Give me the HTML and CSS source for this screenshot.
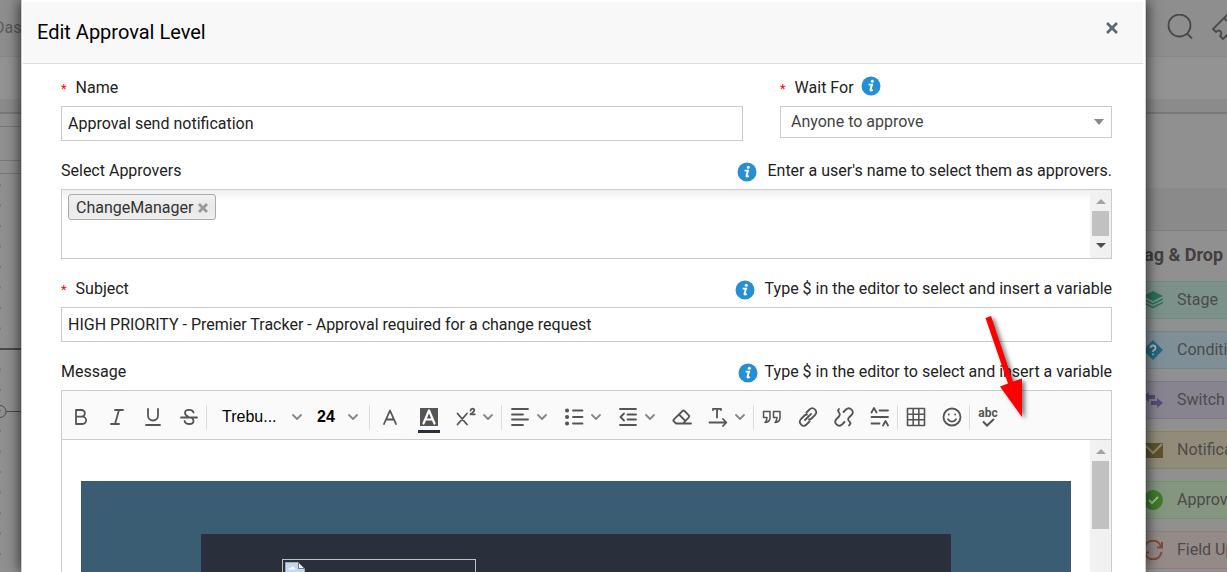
FILE: index.html
```
<!DOCTYPE html>
<html lang="en">
<head>
  <meta charset="utf-8">
  <title>Edit Approval Level</title>
  <meta name="viewport" content="width=device-width, initial-scale=1">
  <link rel="stylesheet" href="styles.css">
</head>
<body>
  <svg width="0" height="0" class="defs" aria-hidden="true">
    <symbol id="chev" viewBox="0 0 10 6"><path d="M1 1l4 4 4-4" fill="none" stroke="#888" stroke-width="1.8" stroke-linecap="round" stroke-linejoin="round"/></symbol>
    <symbol id="info" viewBox="0 0 20 20"><circle cx="10" cy="10" r="9.5" fill="#268fd3"/><circle cx="11.3" cy="5.3" r="1.5" fill="#fff"/><path d="M7.6 8.6h3.4l-1.5 5.2q-.2 1.400 2.200.1" fill="none" stroke="#fff" stroke-width="1.9"/></symbol>
  </svg>

  <div class="page">
    <header class="topbar">
      <span class="topbar-link">Das</span>
      <div class="topbar-icons">
        <svg width="26" height="26" viewBox="0 0 26 26" fill="none" stroke="#494949" stroke-width="1.8"><circle cx="12.500" cy="11.500" r="11"/><path d="M20 19.500l5 5"/></svg>
        <svg width="26" height="26" viewBox="0 0 26 26" fill="none" stroke="#494949" stroke-width="1.8"><path d="M16 0L1 15l3 3q3-3 5 0 1 2-1 4l3 3L26 10M12 4l3 3M13 22h2"/></svg>
      </div>
    </header>
    <div class="subbar"></div>
    <div class="band"></div>
    <div class="workspace">
      <div class="canvas">
        <svg width="22" height="460" viewBox="0 0 22 460" fill="none" stroke="#4a4a4a">
          <path d="M0 12.500h22M0 46.500h22M0 59.500h22" stroke="#787878"/>
          <path d="M.5 70v390" stroke="#777" stroke-dasharray="2 18.500"/>
          <path d="M0 235h22" stroke-width="2"/>
          <path d="M6 297.500h16"/>
          <circle cx="0" cy="297.500" r="6"/>
        </svg>
      </div>
      <aside class="sidebar">
        <div class="sidebar-space"></div>
        <div class="sidebar-head"></div>
        <h2>Drag &amp; Drop</h2>
        <ul>
          <li class="stage">
            <svg width="20" height="20" viewBox="0 0 20 20"><path d="M10 1l10 5-10 5L0 6z" fill="#2d6e5a"/><path d="M0 9l10 5 10-5M0 12.500l10 5 10-5" fill="none" stroke="#2d6e5a" stroke-width="1.5"/></svg>
            <span>Stage</span></li>
          <li class="condition">
            <svg width="20" height="20" viewBox="0 0 20 20"><path d="M10 0l10 10-10 10L0 10z" fill="#286680"/><path d="M7.500 8q0-2.500 2.500-2.500T12.500 8q0 1.500-2.500 3v1M10 13.500v1.800" fill="none" stroke="#a9b5bb" stroke-width="1.800"/></svg>
            <span>Condition</span></li>
          <li class="switch">
            <svg width="20" height="20" viewBox="0 0 20 20" fill="#574d78"><path d="M0 7l6-5v3h6v4H6v3zM20 13l-6 5v-3H8v-4h6V8z"/></svg>
            <span>Switch</span></li>
          <li class="notify">
            <svg width="20" height="20" viewBox="0 0 20 20"><path d="M0 3h20v15H0z" fill="#5e5230"/><path d="M1 4l9 9 9-9" fill="none" stroke="#918b70" stroke-width="2"/></svg>
            <span>Notification</span></li>
          <li class="approve">
            <svg width="20" height="20" viewBox="0 0 20 20"><circle cx="10" cy="10" r="10" fill="#417a2c"/><path d="M6 10l3 3 6-6" fill="none" stroke="#a0b99a" stroke-width="2"/></svg>
            <span>Approval</span></li>
          <li class="update">
            <svg width="20" height="20" viewBox="0 0 20 20" fill="none" stroke="#804a3c" stroke-width="2"><path d="M1.500 8A8.500 8.500 0 0 1 18 6.500M18.500 12A8.500 8.500 0 0 1 2 13.500M19 2v5.500h-5M1 18v-5.500h5"/></svg>
            <span>Field Update</span></li>
        </ul>
      </aside>
    </div>
  </div>

  <div class="modal" role="dialog" aria-labelledby="modal-title">
    <div class="modal-header">
      <h1 id="modal-title">Edit Approval Level</h1>
      <button type="button" class="close" aria-label="Close">
        <svg width="12" height="12" viewBox="0 0 12 12"><path d="M1 1l10 10M11 1L1 11" stroke="#5d6870" stroke-width="2.8"/></svg>
      </button>
    </div>

    <form class="modal-body">
      <div class="field-row">
        <div class="field">
          <div class="label-row"><label for="name" class="required">Name</label></div>
          <input type="text" id="name" value="Approval send notification">
        </div>
        <div class="field field-wait">
          <div class="label-row">
            <label for="wait" class="required">Wait For</label>
            <svg class="info info-label"><use href="#info"/></svg>
          </div>
          <div class="select-box">
            <select id="wait"><option>Anyone to approve</option></select>
            <svg width="10" height="6" viewBox="0 0 10 6"><path d="M0 0h10L5 6z" fill="#888"/></svg>
          </div>
        </div>
      </div>

      <div class="field">
        <div class="label-row">
          <label for="approvers">Select Approvers</label>
          <span class="hint"><svg class="info"><use href="#info"/></svg>Enter a user's name to select them as approvers.</span>
        </div>
        <div class="approvers">
          <div class="tags">
            <span class="tag">ChangeManager
              <button type="button" aria-label="Remove"><svg width="10" height="10" viewBox="0 0 10 10"><path d="M1 1l8 8M9 1L1 9" stroke="#999" stroke-width="2.800"/></svg></button>
            </span>
            <input type="text" id="approvers">
          </div>
          <div class="scrollbar">
            <svg width="10" height="5" viewBox="0 0 10 5"><path d="M5 0l5 5H0z" fill="#a3a3a3"/></svg>
            <div class="thumb"></div>
            <svg width="10" height="5" viewBox="0 0 10 5"><path d="M0 0h10L5 5z" fill="#505050"/></svg>
          </div>
        </div>
      </div>

      <div class="field">
        <div class="label-row">
          <label for="subject" class="required">Subject</label>
          <span class="hint"><svg class="info"><use href="#info"/></svg>Type $ in the editor to select and insert a variable</span>
        </div>
        <input type="text" id="subject" value="HIGH PRIORITY - Premier Tracker - Approval required for a change request">
      </div>

      <div class="field field-message">
        <div class="label-row">
          <span>Message</span>
          <span class="hint hint-tight"><svg class="info"><use href="#info"/></svg>Type $ in the editor to select and insert a variable</span>
        </div>
        <div class="editor">
          <div class="toolbar">
            <div class="group">
              <button type="button" aria-label="Bold"><svg class="icon" viewBox="0 0 20 20"><path d="M5 3h5.500a3.300 3.300 0 0 1 0 6.700H5zM5 9.700h6.500a3.600 3.600 0 0 1 0 7.300H5z"/></svg></button>
              <button type="button" aria-label="Italic"><svg class="icon" viewBox="0 0 20 20"><path d="M8 3h8M4 17h8M12 3L8 17"/></svg></button>
              <button type="button" aria-label="Underline"><svg class="icon" viewBox="0 0 20 20"><path d="M5 2v6.500a5 5 0 0 0 10 0V2M3 18h14"/></svg></button>
              <button type="button" aria-label="Strikethrough"><svg class="icon" viewBox="0 0 20 20"><path d="M14.500 5.500C13.500 2 6 2 6 6q0 2 3 3.500M2 10.500h16M5.500 14c1 4 9 4 9 0q0-2-2-3.500"/></svg></button>
            </div>
            <div class="group">
              <div class="pick pick-font">
                <select aria-label="Font"><option>Trebu...</option></select>
                <svg class="chev"><use href="#chev"/></svg>
              </div>
              <div class="pick pick-size">
                <select aria-label="Font size"><option>24</option></select>
                <svg class="chev"><use href="#chev"/></svg>
              </div>
            </div>
            <div class="group">
              <button type="button" class="color" aria-label="Text color"><svg class="icon" viewBox="0 0 20 20"><path d="M4 17l6-13.500L16 17M6 12.500h8"/></svg><i class="swatch swatch-white"></i></button>
              <button type="button" class="color" aria-label="Background color"><svg class="icon" viewBox="0 0 20 20"><path d="M1 1h18v18H1z" fill="#555" stroke="none"/><path d="M4.500 16.500L10 3.500l5.500 13M6.500 12.500h7" stroke="#fff" stroke-width="2.200"/></svg><i class="swatch"></i></button>
              <button type="button" class="drop" aria-label="Superscript"><svg class="icon" viewBox="0 0 20 20"><path d="M1.500 6.500l9.500 11M11 6.500l-9.500 11M14.500 3.500q.3-1.800 2-1.800t1.800 1.500Q18.300 4.500 14.500 7.300h4.300" /></svg><svg class="chev"><use href="#chev"/></svg></button>
            </div>
            <div class="group">
              <button type="button" class="drop" aria-label="Align"><svg class="icon" viewBox="0 0 20 20"><path d="M2 2h16M2 7.500h11M2 12.500h16M2 18h11"/></svg><svg class="chev"><use href="#chev"/></svg></button>
              <button type="button" class="drop" aria-label="List"><svg class="icon" viewBox="0 0 20 20"><path d="M9 3.500h9.500M9 10h9.500M9 16.500h9.500"/><path d="M3 3.500h.1M3 10h.1M3 16.500h.1" stroke-width="4"/></svg><svg class="chev"><use href="#chev"/></svg></button>
              <button type="button" class="drop" aria-label="Indent"><svg class="icon" viewBox="0 0 20 20"><path d="M2 2h16M9.500 7.500H18M9.500 12.500H18M2 18h16M6 6.500L2.500 10 6 13.500"/></svg><svg class="chev"><use href="#chev"/></svg></button>
              <button type="button" aria-label="Clear format"><svg class="icon" viewBox="0 0 20 20"><path d="M4 16.500h15M4 16.500l-2.300-2.300q-.8-.8 0-1.600L10.500 4q1-1 2 0l4.300 4.300q1 1 0 2L11 16.500M7 7.500l6.500 6.500"/></svg></button>
              <button type="button" class="drop" aria-label="Direction"><svg class="icon" viewBox="0 0 20 20"><path d="M5 3V1.800h8V3M9 2v8.500M1.500 15.500H18M15 12l3.300 3.500L15 19"/></svg><svg class="chev"><use href="#chev"/></svg></button>
            </div>
            <div class="group">
              <button type="button" aria-label="Quote"><svg class="icon" viewBox="0 0 20 20"><path d="M1.500 4.500H8v6.500q0 4-5 4.500 2-1.500 2-5H1.500zM11.500 4.500H18v6.500q0 4-5 4.500 2-1.500 2-5h-3.500z" stroke-width="1.500"/></svg></button>
              <button type="button" aria-label="Link"><svg class="icon" viewBox="0 0 20 20"><path d="M8.500 5.500l3-3c3.500-3.500 9 1.500 5.500 5.500l-3.500 3.500q-1 1-2.500 1M11.500 14.500l-3 3C5 21-.5 16 3 12l3.500-3.500q1-1 2.500-1M7 13l6-6"/></svg></button>
              <button type="button" aria-label="Unlink"><svg class="icon" viewBox="0 0 20 20"><path d="M9.500 5l2.500-2.500c4-3.500 9 2 5.500 5.500L15 10.500q-2 2 .5 4l1 2-1.500 2M10.500 15L8 17.500c-4 3.500-9-2-5.500-5.500L5 9.500q1.500-2 0-4l-1-2L5 2"/></svg></button>
              <button type="button" aria-label="Line height"><svg class="icon" viewBox="0 0 20 20"><path d="M9.500 3.500H18M1.500 10H18M1.500 16.500h8M1.500 5.500L4 1l2.500 4.500M13 18.500l2.500-4.500 2.500 4.500"/></svg></button>
            </div>
            <div class="group">
              <button type="button" aria-label="Table"><svg class="icon" viewBox="0 0 20 20"><path d="M1.500 1.500h17v17h-17zM7.200 1.500v17M12.800 1.500v17M1.500 7.200h17M1.500 12.800h17" stroke-width="1.600"/></svg></button>
              <button type="button" aria-label="Emoji"><svg class="icon" viewBox="0 0 20 20"><circle cx="10" cy="10" r="8.500"/><path d="M6 12.300c2 3 6 3 8 0M6.800 7.500h.1M13.100 7.500h.1"/></svg></button>
            </div>
            <div class="group">
              <button type="button" class="spell" aria-label="Spell check"><span>abc</span><svg width="14" height="9" viewBox="0 0 14 9"><path d="M2 3.500l4 4L13 1" fill="none" stroke="#555" stroke-width="2"/></svg></button>
            </div>
          </div>
          <div class="editor-area">
            <div class="mail">
              <div class="mail-card">
                <div class="broken-image">
                  <svg width="20" height="22" viewBox="0 0 20 22"><path d="M.5.500h13l6 6v15H.5z" fill="#c3d6f5" stroke="#aaa"/><path d="M3 7.500q1-2 3-1.500 2-3 3.500.5 2 0 1.500 1z" fill="#fff"/><path d="M13.500.500v6h6z" fill="#f5f5f5" stroke="#777"/></svg>
                </div>
              </div>
            </div>
            <div class="scrollbar">
              <svg width="10" height="5" viewBox="0 0 10 5"><path d="M5 0l5 5H0z" fill="#a3a3a3"/></svg>
              <div class="thumb thumb-long"></div>
            </div>
          </div>
        </div>
      </div>
    </form>

    <svg class="pointer" width="50" height="110" viewBox="0 0 50 110" aria-hidden="true"><path d="M5.500 8l5.500-2 22 65.500 9-3L42 107 20 76.500l8-3z" fill="#f00"/></svg>
  </div>
</body>
</html>
```
FILE: styles.css
```
* {
  box-sizing: border-box;
}

body {
  margin: 0;
  height: 100vh;
  overflow: hidden;
  background-color: #909090;
  color: #222;
  font-family: Roboto, sans-serif;
  font-size: 16px;
  line-height: 24px;
}

h1, h2, ul {
  margin: 0;
  padding: 0;
}

button, input, select {
  font: inherit;
  color: inherit;
}

button {
  display: flex;
  align-items: center;
  padding: 0;
  border: 0;
  background: none;
  cursor: pointer;
}

select {
  appearance: none;
  border: 0;
  background: none;
}

.defs {
  position: absolute;
}

/* page behind the dialog */
.page {
  display: flex;
  flex-direction: column;
  height: 100vh;
  overflow: hidden;
}

.topbar {
  display: flex;
  justify-content: space-between;
  align-items: center;
  height: 57px;
  flex: none;
  border-bottom: 1px solid #888;
  background-color: #8e8e8e;
}

.topbar-link {
  margin-left: -6px;
  color: #5c5c5c;
}

.topbar-icons {
  display: flex;
  gap: 19px;
  margin-right: -11px;
  padding-bottom: 2px;
}

.subbar {
  flex: none;
  height: 42px;
  background-color: #939393;
}

.band {
  flex: none;
  height: 15px;
  border-bottom: 2px solid #797979;
  background-color: #8b8b8b;
}

.workspace {
  display: flex;
  justify-content: space-between;
  flex: 1;
}

.canvas svg {
  display: block;
}

.sidebar {
  width: 101px;
  color: #4b4b4b;
}

.sidebar-space {
  height: 74px;
}

.sidebar-head {
  height: 43px;
  border-bottom: 1px solid #808080;
  background-color: #8a8a8a;
}

.sidebar h2 {
  height: 50px;
  padding-top: 12px;
  font-size: 18px;
  font-weight: 700;
  white-space: nowrap;
  color: #433f3f;
}

.sidebar ul {
  display: flex;
  flex-direction: column;
  gap: 12px;
  list-style: none;
}

.sidebar li {
  display: flex;
  align-items: center;
  gap: 14px;
  height: 38px;
  padding-left: 17px;
  border-width: 1px 0;
  border-style: solid;
  white-space: nowrap;
  overflow: hidden;
}

.sidebar li svg {
  flex: none;
}

.stage {
  background-color: #7c9189;
  border-color: #6b8c7f;
}

.condition {
  background-color: #7f8f98;
  border-color: #6d8795;
}

.switch {
  background-color: #88848f;
  border-color: #7b7590;
}

.notify {
  background-color: #918c79;
  border-color: #8b8263;
}

.approve {
  background-color: #849580;
  border-color: #729168;
}

.update {
  background-color: #948a87;
  border-color: #917c78;
}

/* dialog */
.modal {
  position: absolute;
  top: 0;
  bottom: 0;
  left: 21px;
  right: 81px;
  display: flex;
  flex-direction: column;
  border: solid #ccc;
  border-width: 0 1px;
  background-color: #fff;
  box-shadow: 0 0 14px rgba(0, 0, 0, 0.8);
}

.modal-header {
  display: flex;
  justify-content: space-between;
  align-items: center;
  flex: none;
  height: 62px;
  margin: 2px 2px 0 1px;
  padding: 0 25px 2px 14px;
  border-bottom: 1px solid #ddd;
  background-color: #f8f8f8;
}

.modal-header h1 {
  font-size: 20px;
  font-weight: 400;
  color: #000;
}

.close {
  padding-bottom: 7px;
}

.modal-body {
  display: flex;
  flex-direction: column;
  flex: 1;
  gap: 17px;
  min-height: 0;
  padding: 11px 33px 0 39px;
}

.field-row {
  display: flex;
  gap: 37px;
}

.field {
  display: flex;
  flex-direction: column;
}

.modal-body > .field {
  flex: none;
}

.field-row .field {
  flex: 1;
}

.field-row .field-wait {
  flex: 0 0 332px;
}

.label-row {
  display: flex;
  justify-content: space-between;
  padding-top: 1px;
  margin-bottom: 6px;
}

.field-wait .label-row {
  justify-content: flex-start;
  gap: 7px;
}

.required::before {
  content: "*";
  margin-right: 9px;
  color: #f00;
  font-size: 13px;
  line-height: 1;
}

.hint {
  display: flex;
  gap: 10px;
}

.hint-tight {
  gap: 7px;
}

.info {
  width: 20px;
  height: 20px;
  margin-top: 3px;
}

.info-label {
  margin-top: 0;
}

.field > input {
  width: 100%;
  height: 35px;
  padding: 0 6px;
  border: 1px solid #ccc;
}

.select-box {
  display: grid;
  align-items: center;
  height: 32px;
  border: 1px solid #ccc;
  color: #444;
}

.select-box > *, .pick > * {
  grid-area: 1 / 1;
}

.select-box select {
  height: 30px;
  padding: 0 10px;
}

.select-box svg {
  justify-self: end;
  margin-right: 7px;
  pointer-events: none;
}

.approvers {
  display: flex;
  height: 70px;
  border: 1px solid #ccc;
}

.tags {
  display: flex;
  align-items: flex-start;
  flex: 1;
  padding: 4px 6px;
  background-image: linear-gradient(#eee, #fff 10px);
}

.tags input {
  flex: 1;
  border: 0;
  background: none;
}

.tag {
  display: flex;
  align-items: center;
  gap: 5px;
  height: 26px;
  padding: 1px 7px 0;
  border: 1px solid #aaa;
  border-radius: 3px;
  background-image: linear-gradient(#f2f2f2, #e9e9e9 50%, #eee);
  color: #333;
}

.scrollbar {
  display: flex;
  flex-direction: column;
  align-items: center;
  width: 21px;
  padding: 9px 0;
  gap: 7px;
  background-color: #f1f1f1;
}

.thumb {
  width: 17px;
  height: 25px;
  background-color: #c1c1c1;
}

.thumb-long {
  height: 68px;
}

/* message editor */
.modal-body > .field-message {
  flex: 1;
  min-height: 0;
}

.editor {
  display: flex;
  flex-direction: column;
  flex: 1;
  min-height: 0;
  border: 1px solid #ccc;
  border-bottom: 0;
}

.toolbar {
  display: flex;
  align-items: center;
  flex: none;
  height: 49px;
  padding: 4px 0 0 1px;
  border-bottom: 1px solid #ccc;
  background-color: #fafafa;
}

.group {
  display: flex;
  align-items: center;
  height: 25px;
}

.group + .group {
  margin-left: -1px;
  border-left: 1px solid #ddd;
}

.group button {
  justify-content: center;
  width: 36px;
}

.group .drop {
  justify-content: flex-start;
  gap: 7px;
  width: 54px;
  padding-left: 8px;
}

.icon {
  width: 20px;
  height: 20px;
  fill: none;
  stroke: #555;
  stroke-width: 1.8;
  stroke-linecap: round;
  stroke-linejoin: round;
}

.chev {
  width: 10px;
  height: 6px;
  pointer-events: none;
}

.pick {
  display: grid;
  align-items: center;
  font-family: "Liberation Sans", Arial, sans-serif;
  color: #000;
}

.pick .chev {
  justify-self: end;
}

.pick-font {
  width: 95px;
  padding-left: 15px;
}

.pick-size {
  width: 68px;
  padding: 0 12px 0 15px;
  font-weight: 700;
}

.group .color {
  flex-direction: column;
  gap: 3px;
  width: 39px;
  padding-top: 6px;
}

.swatch {
  width: 22px;
  height: 3px;
  background-color: #29303b;
}

.swatch-white {
  background-color: #fff;
}

.group .spell {
  flex-direction: column;
  font-size: 12px;
  font-weight: 700;
  line-height: 10px;
  color: #555;
}

.editor-area {
  display: flex;
  flex: 1;
  min-height: 0;
}

.mail {
  flex: 1;
  margin: 41px 19px 0;
  padding: 53px 40px 0;
  background-color: #3b5d73;
}

.mail-card {
  max-width: 750px;
  height: 100%;
  margin: 0 auto;
  padding: 25px 81px 0;
  background-color: #29303b;
}

.broken-image {
  width: 194px;
  height: 100%;
  padding: 2px;
  overflow: hidden;
  border: 1px solid #c0c0c0;
  border-bottom: 0;
}

/* callout over the toolbar */
.pointer {
  position: absolute;
  top: 310px;
  right: 115px;
  filter: drop-shadow(3px 2px 2px rgba(0, 0, 0, 0.5));
  pointer-events: none;
}
```
